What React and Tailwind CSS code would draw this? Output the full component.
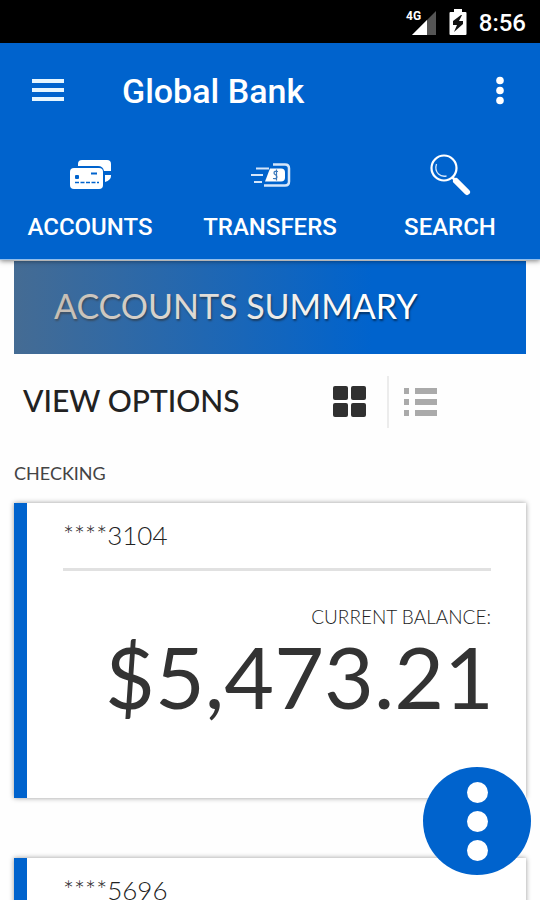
import React from "react";

const accounts = [
  { id: "3104", balance: "$5,473.21" },
  { id: "5696" },
];

function StatusBar() {
  return (
    <div className="flex h-[43px] shrink-0 items-center justify-end bg-black pr-[14px] text-white">
      <svg className="mr-3 h-[28px] w-[32px]" viewBox="0 0 32 28" role="img" aria-label="4G signal">
        <text x="1" y="12" fill="#fff" fontSize="12" fontWeight="700" fontFamily="Roboto, sans-serif">4G</text>
        <path d="M7 27 31 3v24z" fill="#555" />
        <path d="M7 27 22 12v15z" fill="#fff" />
      </svg>
      <svg className="mr-3 h-[28px] w-[18px]" viewBox="0 0 18 28" role="img" aria-label="Charging">
        <path d="M5 1h8v3h3.500q1 0 1 1v21q0 1-1 1h-15q-1 0-1-1V5q0-1 1-1H5z" fill="#fff" />
        <path d="M12 7 4 13v4h4l-3 7 9-8v-3h-4l3-6z" fill="#111" />
      </svg>
      <span className="pt-[3px] text-2xl leading-10 font-medium">8:56</span>
    </div>
  );
}

function CardsIcon() {
  return (
    <svg className="h-[44px] w-[44px]" viewBox="0 0 44 44" aria-hidden="true">
      <path d="M10 11q0-4 4-4h25q4 0 4 4v7h-7q-1-5-6-5H10z" fill="#fff" />
      <path d="M37 22h6v1q0 4-6 6z" fill="#fff" />
      <rect x="2" y="15" width="33" height="21" rx="4" fill="#fff" />
      <rect x="7" y="22" width="4" height="4" rx="1" fill="#0063cd" />
      <path d="M23 20.500h6" stroke="#0063cd" strokeWidth="2" />
      <path d="M7 29.500h24" stroke="#0063cd" strokeWidth="1.500" strokeDasharray="4 1.500" />
    </svg>
  );
}

function TransferIcon() {
  return (
    <svg className="h-[44px] w-[44px]" viewBox="0 0 44 44" fill="none" aria-hidden="true">
      <path d="M8 15.500h13M3 22h12M6 29h8" stroke="#d5e6fa" strokeWidth="2" />
      <path d="M25 11.500h12q4 0 4 4v13q0 4-4 4H16" stroke="#d5e6fa" strokeWidth="2.500" />
      <path d="M22 15.500h11q4 0 4 4v5q0 4-4 4H17z" fill="#fff" />
      <path d="M30 18.500q-4-1-4 1.500c0 2 3 1.500 3 4q0 2-4 1.500M28.500 16.500v11" stroke="#3b78bb" strokeWidth="1.200" />
    </svg>
  );
}

function SearchIcon() {
  return (
    <svg className="h-[44px] w-[44px]" viewBox="0 0 44 44" fill="none" aria-hidden="true">
      <circle cx="16" cy="15" r="12.500" stroke="#fff" strokeWidth="2.200" />
      <path d="M8.500 11q-2 6 2 10 3 3 8 2" stroke="#d5e6fa" strokeWidth="1.300" />
      <path d="m24 24 4 4" stroke="#fff" strokeWidth="2.500" />
      <path d="m28 28 11 11" stroke="#fff" strokeWidth="6" strokeLinecap="round" />
    </svg>
  );
}

function NavTab({ icon, label }) {
  return (
    <button type="button" className="flex flex-1 flex-col items-center gap-4 text-2xl leading-7 font-medium">
      {icon}
      {label}
    </button>
  );
}

function Header() {
  return (
    <header className="relative z-10 shrink-0 border-b border-[#8fbdec] bg-[#0063cd] text-white shadow-[0_1px_5px_rgba(0,0,0,0.5)]">
      <div className="flex h-24 items-center pr-7 pl-7">
        <button type="button" aria-label="Menu" className="h-10 w-10">
          <svg className="h-10 w-10" viewBox="0 0 40 40" aria-hidden="true">
            <path d="M4 10h32M4 19h32M4 28h32" stroke="#e6f6ff" strokeWidth="4" />
          </svg>
        </button>
        <h1 className="ml-[54px] flex-1 text-[34px] leading-10 font-medium">Global Bank</h1>
        <button type="button" aria-label="More options" className="h-10 w-6">
          <svg className="h-10 w-6" viewBox="0 0 24 40" fill="#fff" aria-hidden="true">
            <circle cx="12" cy="9.500" r="3.800" />
            <circle cx="12" cy="19.500" r="3.800" />
            <circle cx="12" cy="29.500" r="3.800" />
          </svg>
        </button>
      </div>
      <nav className="flex pt-[14px] pb-[18px]">
        <NavTab icon={<CardsIcon />} label="ACCOUNTS" />
        <NavTab icon={<TransferIcon />} label="TRANSFERS" />
        <NavTab icon={<SearchIcon />} label="SEARCH" />
      </nav>
    </header>
  );
}

function AccountCard({ id, balance }) {
  return (
    <article className="mb-[60px] min-h-[295px] border-l-[13px] border-[#0063cd] bg-white pr-[35px] pl-9 shadow-[0_0_5px_rgba(0,0,0,0.4)]">
      <h3 className="border-b-[3px] border-[#e1e1e1] py-4 text-[26px] leading-[33px] font-light text-[#222]">****{id}</h3>
      {balance && (
        <>
          <p className="pt-[34px] text-right text-[19px] leading-6 font-light text-[#222]">CURRENT BALANCE:</p>
          <p className="-mr-[3px] text-right text-[86px] leading-[94px] text-[#333]">{balance}</p>
        </>
      )}
    </article>
  );
}

export default function App() {
  return (
    <div className="relative flex h-screen flex-col overflow-hidden bg-[#fefefe] font-[Roboto,sans-serif]">
      <StatusBar />
      <Header />
      <main className="min-h-0 flex-1 overflow-hidden px-[14px] pt-px font-[Lato,sans-serif]">
        <div className="relative bg-[#0063cd] px-10 pt-[22px] pb-[26px]">
          <h2 className="text-[34px] leading-[45px] text-white [text-shadow:1px_2px_2px_rgba(0,0,0,0.5)]">ACCOUNTS SUMMARY</h2>
          <div className="pointer-events-none absolute inset-0 bg-linear-to-r from-[rgba(130,115,96,0.53)] to-[rgba(130,115,96,0)] to-70%" />
        </div>
        <div className="flex h-[95px] items-center pl-[9px]">
          <h2 className="flex-1 pb-1 text-[30px] leading-9 font-medium text-[#222]">VIEW OPTIONS</h2>
          <div className="mr-[87px] flex items-center">
            <button type="button" aria-label="Grid view" className="mr-5">
              <svg className="h-9 w-9" viewBox="0 0 36 36" fill="#303030" aria-hidden="true">
                <rect x="2" y="2" width="15" height="14" rx="2" />
                <rect x="20" y="2" width="15" height="14" rx="2" />
                <rect x="2" y="19" width="15" height="14" rx="2" />
                <rect x="20" y="19" width="15" height="14" rx="2" />
              </svg>
            </button>
            <div className="h-[52px] w-[2px] bg-[#ececec]" />
            <button type="button" aria-label="List view" className="ml-[14px]">
              <svg className="h-9 w-9" viewBox="0 0 36 36" fill="#aaa" aria-hidden="true">
                <path d="M1 4h5v6H1zM12 4h22v6H12zM1 15h5v6H1zM12 15h22v6H12zM1 26h5v6H1zM12 26h22v6H12z" />
              </svg>
            </button>
          </div>
        </div>
        <h2 className="pt-3 pb-[18px] text-lg leading-6 text-[#444]">CHECKING</h2>
        {accounts.map((account) => (
          <AccountCard key={account.id} {...account} />
        ))}
      </main>
      <button
        type="button"
        aria-label="Quick actions"
        className="absolute right-[9px] bottom-[25px] z-20 flex h-[108px] w-[108px] flex-col items-center justify-center gap-2 rounded-full bg-[#0063cd]"
      >
        <span className="h-[21px] w-[21px] rounded-full bg-white" />
        <span className="h-[21px] w-[21px] rounded-full bg-white" />
        <span className="h-[21px] w-[21px] rounded-full bg-white" />
      </button>
    </div>
  );
}
